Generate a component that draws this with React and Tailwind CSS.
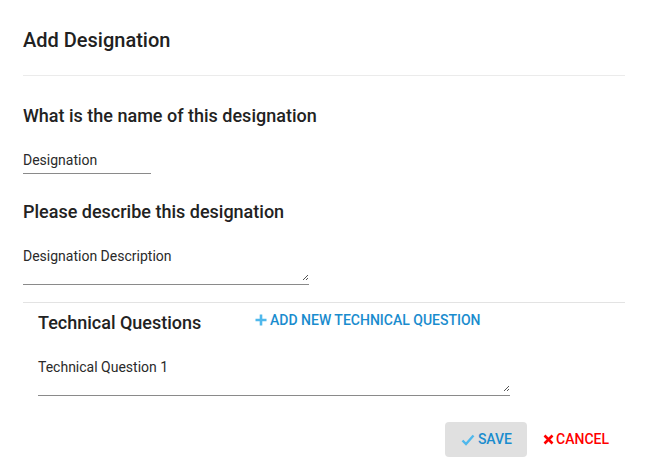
import React from 'react';

const ResizeGrip = () => (
  <svg className="absolute right-0 bottom-[3px]" width="7" height="7" viewBox="0 0 7 7">
    <path d="M1 6 L6 1 M4 6 L6 4" stroke="#555" strokeWidth="1" fill="none" />
  </svg>
);

const UnderlineField = ({ label, className }) => (
  <div className={`relative border-b border-[#8a8a8a] ${className}`}>
    <div className="text-[14px] leading-[20px] text-[#2a2a2a]">{label}</div>
  </div>
);

const TextArea = ({ label, className }) => (
  <div className={`relative h-[39px] border-b border-[#8a8a8a] ${className}`}>
    <div className="text-[14px] leading-[20px] text-[#2a2a2a]">{label}</div>
    <ResizeGrip />
  </div>
);

export default function App() {
  return (
    <div className="w-[649px] h-[466px] bg-white px-[23px] pr-[24px] font-['Roboto','Liberation_Sans',sans-serif] text-[#222]">
      {/* header */}
      <div className="h-[76px] pt-[28px] border-b border-[#ebebeb]">
        <h2 className="text-[20px] leading-[24px] font-medium text-[#212121]">Add Designation</h2>
      </div>

      <h3 className="mt-[28px] text-[18px] leading-[24px] font-medium">What is the name of this designation</h3>
      <UnderlineField label="Designation" className="mt-[22px] h-[24px] w-[128px]" />

      <h3 className="mt-[26px] text-[18px] leading-[24px] font-medium">Please describe this designation</h3>
      <TextArea label="Designation Description" className="mt-[22px] w-[286px]" />

      <div className="mt-[17px] border-t border-[#e3e3e3]" />

      {/* technical questions */}
      <div className="pl-[15px]">
        <div className="mt-[8px] flex items-start">
          <h3 className="w-[217px] text-[18px] leading-[24px] font-medium">Technical Questions</h3>
          <button className="-mt-px flex items-center gap-[3px] text-[14px] leading-[20px] font-medium uppercase text-[#1a8cce]">
            <svg width="12" height="12" viewBox="0 0 12 12">
              <path d="M6 0.5 V11.5 M0.5 6 H11.5" stroke="#4fb8ec" strokeWidth="2.6" />
            </svg>
            Add New Technical Question
          </button>
        </div>
        <TextArea label="Technical Question 1" className="mt-[22px] w-[472px]" />
      </div>

      {/* actions */}
      <div className="mt-[26px] flex justify-end">
        <button className="h-[35px] pl-[16px] pr-[15px] rounded-[4px] bg-[#e0e0e0] flex items-center gap-[3px] text-[14px] font-medium uppercase text-[#1a8cce]">
          <svg width="14" height="12" viewBox="0 0 14 12">
            <path d="M1.5 6.5 L5 10 L12.5 1.5" stroke="#4fb8ec" strokeWidth="2.4" fill="none" />
          </svg>
          Save
        </button>
        <button className="h-[35px] pl-[16px] pr-[16px] flex items-center gap-[2px] text-[14px] font-medium uppercase text-[#f00]">
          <svg width="11" height="11" viewBox="0 0 11 11">
            <path d="M1.5 1.5 L9.5 9.5 M9.5 1.5 L1.5 9.5" stroke="#f00" strokeWidth="2.6" />
          </svg>
          Cancel
        </button>
      </div>
    </div>
  );
}
